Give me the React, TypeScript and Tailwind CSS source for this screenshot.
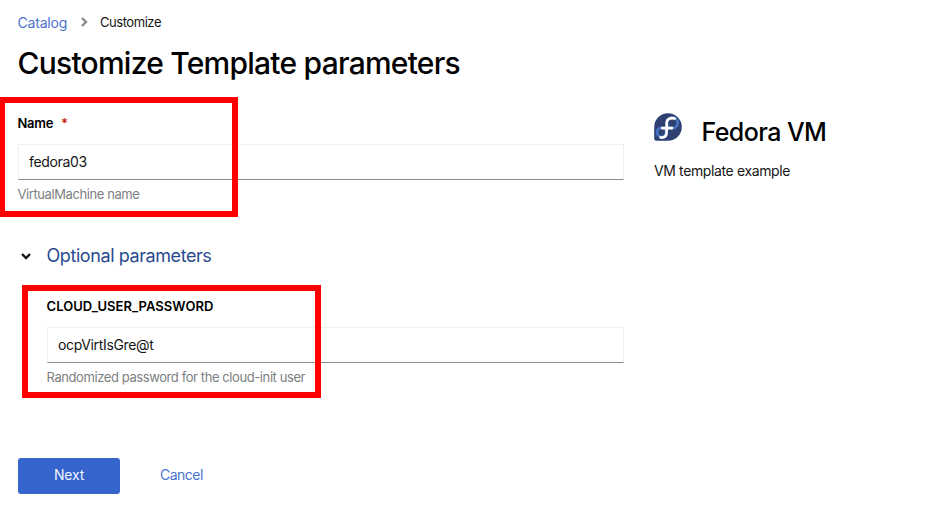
import type { ReactNode } from "react";

function Chevron({ className }: { className: string }) {
  return (
    <svg viewBox="0 0 10 10" className={className} fill="none" stroke="currentColor" strokeWidth="2.4">
      <path d="M1 3l4 4 4-4" />
    </svg>
  );
}

function FedoraLogo() {
  return (
    <svg viewBox="0 0 28 28" className="size-7 shrink-0" fill="none">
      <path d="M14 .2A13.8 13.8 0 0 0 .2 14v11.7A2.1 2.1 0 0 0 2.3 27.8H14A13.8 13.8 0 0 0 14 .2Z" fill="#2f4173" />
      <circle cx="18.4" cy="9.8" r="5.4" stroke="#4470bd" strokeWidth="3" />
      <circle cx="7.7" cy="19.3" r="4.6" stroke="#4470bd" strokeWidth="3" />
      <path
        d="M20.6 5.5c-4.2-1.4-8 .7-8 4.9v9.2c0 3.8-2.6 5.5-6 4.8M8.2 15.1h9.8"
        stroke="#fff"
        strokeWidth="2.7"
        strokeLinecap="round"
      />
    </svg>
  );
}

function TextField({ label, value, help }: { label: ReactNode; value: string; help: string }) {
  return (
    <div>
      <label className="-ml-[0.5px] block h-5 text-[13px] leading-5 font-semibold tracking-[0.05px] text-black">{label}</label>
      <input
        defaultValue={value}
        className="mt-[11px] block h-9 w-full border border-[#f0f0f0] border-b-[#8a8d90] bg-white px-[10px] pb-px text-[14px] tracking-[-0.34px] text-[#151515] outline-none"
      />
      <p className="mt-1 -ml-[0.5px] h-[21px] text-[13px] leading-5 tracking-[-0.41px] whitespace-nowrap text-[#7c7f82]">{help}</p>
    </div>
  );
}

export default function App() {
  return (
    <main className="relative h-[517px] w-[931px] overflow-hidden bg-white px-[18px] pt-3 font-['Inter','Liberation_Sans',sans-serif] text-[#151515]">
      <nav className="flex h-5 items-center whitespace-nowrap">
        <a className="mt-[2px] -ml-[0.5px] w-[49.5px] text-[14px] leading-5 tracking-[-0.2px] text-[#4a72cf]">Catalog</a>
        <Chevron className="ml-3 size-[10px] -rotate-90 text-[#8a8d90]" />
        <span className="ml-[11px] text-[13px] leading-5 tracking-[-0.45px]">Customize</span>
      </nav>
      <h1 className="mt-[11px] -ml-[0.5px] h-[41px] text-[30px] leading-10 font-[450] tracking-[-0.76px] whitespace-nowrap text-black">
        Customize Template parameters
      </h1>

      <div className="mt-[29px] flex">
        <form className="w-[606px]">
          <TextField
            label={<><span className="tracking-[-0.3px]">Name</span><span className="ml-2 text-[#c9190b]">*</span></>}
            value="fedora03"
            help="VirtualMachine name"
          />
          <button type="button" className="mt-[37px] flex h-7 items-center whitespace-nowrap">
            <Chevron className="ml-[3px] size-[10px] text-[#151515]" />
            <span className="ml-[15.5px] text-[18px] leading-7 tracking-[-0.42px] text-[#2b4b8f]">Optional parameters</span>
          </button>
          <div className="mt-[26px] pl-[29px]">
            <TextField
              label="CLOUD_USER_PASSWORD"
              value="ocpVirtIsGre@t"
              help="Randomized password for the cloud-init user"
            />
          </div>
          <div className="mt-[70px] flex h-9 items-center">
            <button type="button" className="h-9 w-[102px] rounded-[3px] bg-[#3564cd] pb-[3px] text-[14px] tracking-[-0.2px] text-[#f0f4ff]">Next</button>
            <button type="button" className="ml-10 pb-[3px] text-[14px] tracking-[-0.5px] text-[#4a72cf]">Cancel</button>
          </div>
        </form>
        <aside className="ml-[30px]">
          <div className="flex whitespace-nowrap">
            <FedoraLogo />
            <h2 className="mt-[3px] ml-[19.5px] text-[25px] leading-8 font-[450] tracking-[-0.58px] text-black">Fedora VM</h2>
          </div>
          <p className="mt-[13px] text-[14px] leading-5 tracking-[-0.38px] whitespace-nowrap">VM template example</p>
        </aside>
      </div>

      <div className="pointer-events-none absolute top-[97px] -left-px h-[120px] w-[239px] border-6 border-[#ff0000]" />
      <div className="pointer-events-none absolute top-[285px] left-[22px] h-[113px] w-[299px] border-6 border-[#ff0000]" />
    </main>
  );
}
